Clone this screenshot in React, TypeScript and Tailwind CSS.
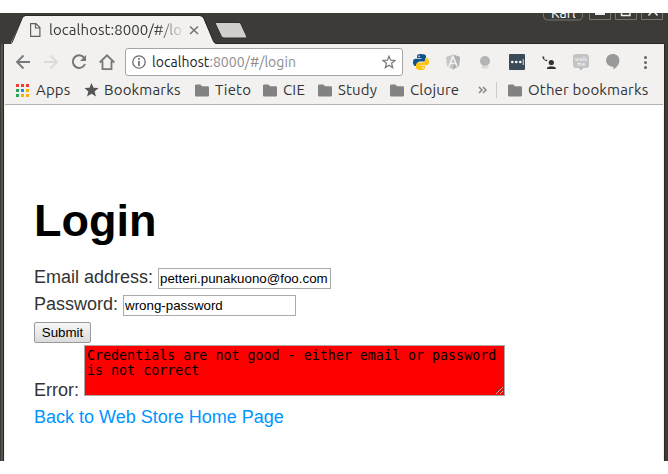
import React from "react";

const uiFont = "font-['Ubuntu','Noto_Sans',sans-serif]";

function Folder() {
  return (
    <svg className="block h-[13px] w-[14px] shrink-0" viewBox="0 0 14 13">
      <path d="M1.200 0.500h4.200l1.600 1.800h5.800q1.200 0 1.200 1.200v7.800q0 1.200-1.200 1.200H1.200Q0 12.500 0 11.300V1.700Q0 .5 1.200.5z" fill="#828282" />
    </svg>
  );
}

function Bookmark({ label, width, icon }: { label: string; width: string; icon?: React.ReactNode }) {
  return (
    <div className={`flex shrink-0 items-center ${width}`}>
      <div className="w-[20px] shrink-0">{icon ?? <Folder />}</div>
      <span className="whitespace-nowrap text-[15px] leading-[18px] tracking-[0.170px] text-[#333]">{label}</span>
    </div>
  );
}

function AppsIcon() {
  const colors = ["#ef3b32", "#ef3b32", "#ef3b32", "#27a35a", "#1e88f5", "#fbb000", "#27a35a", "#fbb000", "#fbb000"];
  return (
    <svg className="block h-[13px] w-[13px]" viewBox="0 0 13 13" shapeRendering="crispEdges">
      {colors.map((c, i) => (
        <rect key={i} x={(i % 3) * 5} y={Math.floor(i / 3) * 5} width="3" height="3" fill={c} />
      ))}
    </svg>
  );
}

function TitleBar() {
  return (
    <div className="relative h-[31px] shrink-0 overflow-hidden bg-[#3c3b37]">
      <svg className="absolute left-0 top-0 block" width="668" height="31" viewBox="0 0 668 31">
        <path d="M4 30.500H664" stroke="#292825" />
        <path d="M4 31V30.500h5q2 0 3-2.500L22.500 5q1-2 3-2H200q2.500 0 3.500 2.500L213 28q1 2.500 3 2.500V31z" fill="#f2f1f0" />
        <path d="M11 30.500Q12 30 13 27.500L22 5.500q1-3 3.500-3H200q3 0 4 3L213.500 28q1 2.500 3 2.500" fill="none" stroke="#2b2a27" />
        <path d="M4 31V30h8l-1 1z" fill="#3c3b37" />
        <path d="M216.500 9.500H239q1.500 0 2 1.500l5.500 12q.8 2-1 2H224q-2 0-2.800-2L215.500 11q-.5-1.500 1-1.500z" fill="#d0cfcd" stroke="#2f2e2b" />
        <path d="M30.600 10.600h5.400l3.900 4v8.800h-9.300zM35.500 10.600V15h4.400" fill="none" stroke="#606060" strokeWidth="1.200" />
        <path d="M190 13.500l8 7.500M198 13.500l-8 7.500" stroke="#77716d" strokeWidth="1.500" />
        <g fill="none" stroke="#77766f">
          <path d="M543.500-2V3q0 4 4 4H578q4.500 0 4.500-4V-2" />
          <path d="M589.500-2V6.500h21V-2M615.500-2V6.500h21V-2M641.500-2V6.500h21V-2" />
        </g>
        <rect x="595" y="0" width="10" height="2" fill="#eee" />
        <path d="M621.500-2V2.500h8.500V-2" fill="none" stroke="#eee" strokeWidth="1.400" />
        <path d="M653-2.500l-4.500 5M653-2.500l4.500 5" stroke="#eee" strokeWidth="1.500" />
      </svg>
      <span className="absolute left-[49px] top-[7px] w-[132px] overflow-hidden whitespace-nowrap bg-[linear-gradient(90deg,#333_80%,transparent_104%)] bg-clip-text text-[15px] leading-[20px] tracking-[0.050px] text-transparent">localhost:8000/#/login</span>
      <span className="absolute left-[551px] top-[-9px] text-[14px] leading-[18px] text-white">Karl</span>
    </div>
  );
}

function Toolbar() {
  return (
    <div className="flex h-[36px] shrink-0 items-center pl-[12px]">
      <svg className="shrink-0" width="109" height="36" viewBox="16 44 109 36" fill="none" stroke="#777" strokeWidth="1.800">
        <path d="M30 62H17.500M23.500 55.500L17 62l6.500 6.500" />
        <path d="M44 62h12.500M50.500 55.500L57 62l-6.500 6.500" stroke="#dcdbda" />
        <path d="M84.300 58A6.300 6.300 0 1 0 85 64" strokeWidth="2" />
        <path d="M86 55v6h-6z" fill="#777" stroke="none" />
        <path d="M99.700 62.500L107 55.300l7.300 7.200M102.500 61v8.200h9V61" />
      </svg>
      <div className="flex h-[28px] w-[278px] shrink-0 items-center rounded-[3px] border border-[#a6a5a4] bg-white pl-[6px] pr-[6px]">
        <svg className="shrink-0" width="14" height="14" viewBox="0 0 14 14">
          <circle cx="7" cy="7" r="6.200" fill="none" stroke="#6b6b6b" strokeWidth="1.300" />
          <path d="M7 3v1.800M7 6v5" stroke="#6b6b6b" strokeWidth="1.700" />
        </svg>
        <span className="ml-[6px] flex-1 whitespace-nowrap text-[14px] leading-[20px] tracking-[0.050px] text-[#222]">localhost<span className="text-[#8c8c8c]">:8000/#/login</span></span>
        <svg className="shrink-0" width="14" height="14" viewBox="0 0 14 14">
          <path d="M7 1.200l1.600 4 4.400.3-3.400 2.800 1.100 4.300L7 10.300l-3.700 2.300 1.100-4.300L1 5.500l4.400-.3z" fill="none" stroke="#777" strokeWidth="1.200" />
        </svg>
      </div>
      <svg className="shrink-0" width="260" height="36" viewBox="403 44 260 36">
        <path d="M420.800 54c-3.200 0-3.800 1-3.800 2.500V58h4.500v.8h-6c-1.700 0-2.500 1.500-2.500 3.500s.8 3.700 2.500 3.700h1.700v-2c0-1.500 1-2.500 2.500-2.500h4c1.200 0 2.300-.9 2.300-2.200v-3c0-1.600-1.600-2.300-5.200-2.300z" fill="#11528b" />
        <path d="M421.200 70c3.200 0 3.800-1 3.800-2.500V66h-4.500v-.8h6c1.700 0 2.500-1.300 2.500-3.200s-.8-3.900-2.500-3.900H425v2.200c0 1.300-1 2.300-2.500 2.300h-4c-1.300 0-2.500 1-2.500 2.400v2.700c0 1.600 2 2.300 5.200 2.300z" fill="#ffc411" />
        <circle cx="419" cy="56.200" r=".8" fill="white" /><circle cx="423" cy="67.800" r=".8" fill="white" />
        <path d="M453 54.500l7 2.500-1 9-6 3.500-6-3.500-1-9z" fill="#c6c6c6" /><path d="M453 54.500l7 2.500-1 9-6 3.500z" fill="#b0b0b0" />
        <path d="M448.800 66.500L453 56.500l4.200 10M450.500 63.500h5" fill="none" stroke="#f2f1f0" strokeWidth="1.700" />
        <path d="M481.500 65.500h7v2.500q-3.500 2-7 0z" fill="#dcdcdc" /><circle cx="485" cy="61" r="5" fill="#b4b4b4" />
        <rect x="509" y="54" width="16" height="16" rx="1" fill="#394b56" />
        <g fill="white"><circle cx="512.300" cy="62" r="1.300" /><circle cx="516.300" cy="62" r="1.300" /><circle cx="520.300" cy="62" r="1.300" /><path d="M522.800 59h.8v6h-.8z" /></g>
        <path d="M542.300 56.500q.3 3.500 4.500 4.800l.7-.9-1.200-.9-.8.400q-1.200-.6-1.500-1.700l.5-.6-.7-1.200z" fill="#303030" />
        <circle cx="551.300" cy="62.500" r="2.600" fill="#303030" /><path d="M547 69v-1.200q1.200-1.600 4.400-1.600t4.400 1.600V69z" fill="#303030" />
        <rect x="573" y="54" width="16" height="14" rx="3" fill="#c3c3c3" /><path d="M578.500 67.500h5l-2.500 3z" fill="#b8b8b8" />
        <g fill="white" fontFamily="Ubuntu, Noto Sans, sans-serif" fontSize="5.500"><text x="575" y="60.500" textLength="12">walk</text><text x="577" y="66" textLength="8">me</text></g>
        <path d="M612.700 54c4 0 6.700 2.700 6.700 6.500 0 3.500-2.500 6.800-6 9v-2.700c-4 0-7.300-2.500-7.300-6.300 0-3.700 2.900-6.500 6.600-6.500z" fill="#999" />
        <g fill="#666"><circle cx="645.500" cy="57.500" r="1.500" /><circle cx="645.500" cy="62.500" r="1.500" /><circle cx="645.500" cy="67.500" r="1.500" /></g>
      </svg>
    </div>
  );
}

function Bookmarks() {
  const star = <svg className="block" width="15" height="14" viewBox="0 0 15 14"><path d="M7.500 0l2 4.800 5.100.3-4 3.300 1.400 5.100-4.500-2.800L3 13.500l1.400-5.100-4-3.300 5.100-.3z" fill="#555" /></svg>;
  return (
    <div className="mx-px flex h-[25px] shrink-0 items-center border-b border-[#b3b2b1] pb-[4px] pl-[11px]">
      <Bookmark label="Apps" width="w-[68px]" icon={<AppsIcon />} />
      <Bookmark label="Bookmarks" width="w-[111px]" icon={star} />
      <Bookmark label="Tieto" width="w-[68px]" />
      <Bookmark label="CIE" width="w-[55px]" />
      <Bookmark label="Study" width="w-[72px]" />
      <Bookmark label="Clojure" width="w-[87.500px]" />
      <svg className="shrink-0" width="9" height="8" viewBox="0 0 9 8"><path d="M1 1l3 3-3 3M5 1l3 3-3 3" fill="none" stroke="#858585" strokeWidth="1.500" /></svg>
      <div className="ml-[9.500px] mr-[11px] h-[16px] w-px shrink-0 bg-[#cbcac9]" />
      <Bookmark label="Other bookmarks" width="w-[145px]" />
    </div>
  );
}

export default function App() {
  return (
    <div className={`h-[474px] w-[668px] overflow-hidden bg-white pt-[13px] ${uiFont}`}>
      <div className="flex h-[448px] flex-col bg-[#3c3b37]">
        <TitleBar />
        <div className="flex min-h-0 flex-1">
          <div className="w-[4px] shrink-0 border-x border-l-[#3c3b37] border-r-[#292825] bg-[#55534e]" />
          <div className="flex w-[660px] flex-col bg-[#f2f1f0]">
            <Toolbar />
            <Bookmarks />
            <main className="mx-px flex-1 bg-white pl-[29px] font-['Liberation_Sans',Arial,sans-serif] text-[18px] text-[#333]">
              <h1 className="mt-[89px] h-[54px] text-[45px] font-bold leading-[54px] text-black">Login</h1>
              <div className="mt-[15px] flex h-[27px] items-start leading-[27px]">
                <label className="mr-[5px] mt-px w-[119px] whitespace-nowrap">Email address:</label>
                <input className="mt-[5px] h-[21px] w-[173px] border border-[#a9a9a9] bg-white px-[1px] text-[13.333px] leading-[17px] text-black outline-none" readOnly value="petteri.punakuono@foo.com" />
              </div>
              <div className="flex h-[27px] items-start leading-[27px]">
                <label className="mr-[5px] mt-px w-[84px] whitespace-nowrap">Password:</label>
                <input className="mt-[5px] h-[21px] w-[173px] border border-[#a9a9a9] bg-white px-[1px] text-[13.333px] leading-[17px] text-black outline-none" readOnly value="wrong-password" />
              </div>
              <button className="mt-[5px] block h-[21px] w-[57px] rounded-[2px] border border-[#999] bg-linear-to-b from-[#f7f7f7] to-[#dcdcdc] text-[13.333px] leading-[19px] text-black">Submit</button>
              <div className="mt-[2px] flex h-[53px] items-start">
                <label className="mr-[5px] mt-[32px] w-[45px] whitespace-nowrap leading-[27px]">Error:</label>
                <div className="relative h-[51px] w-[421px] border border-[#a9a9a9] bg-[#f00] px-[2px] pt-[2px] font-['DejaVu_Sans_Mono',monospace] text-[13.333px] leading-[15px] text-black">
                  Credentials are not good - either email or password<br />is not correct
                  <svg className="absolute bottom-[1px] right-[1px]" width="8" height="8" viewBox="0 0 8 8"><path d="M0 7l7-7M4 7l3-3" stroke="#703030" /><path d="M1 8l7-7M5 8l3-3" stroke="#eee" strokeDasharray="1 .5" /></svg>
                </div>
              </div>
              <a className="mt-[6px] block leading-[27px] text-[#0095ff]">Back to Web Store Home Page</a>
            </main>
          </div>
          <div className="w-[4px] shrink-0 border-l border-[#292825] bg-[#3c3b37]" />
        </div>
      </div>
    </div>
  );
}
